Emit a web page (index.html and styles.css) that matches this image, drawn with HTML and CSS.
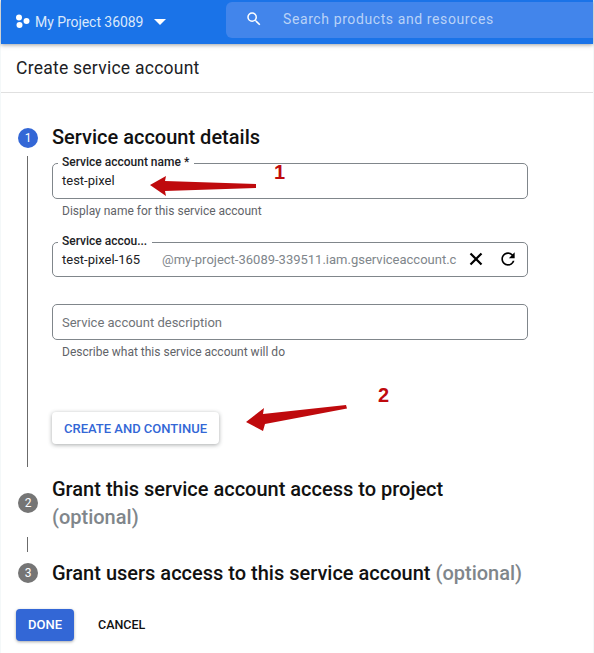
FILE: index.html
```html
<!DOCTYPE html>
<html lang="en">
<head>
<meta charset="utf-8">
<title>Create service account</title>
<link rel="stylesheet" href="styles.css">
</head>
<body>
<div class="page">
  <header class="topbar">
    <div class="project">
      <svg class="dots" width="15" height="14" viewBox="0 0 15 14"><circle cx="4" cy="3.5" r="3" fill="#fff"/><circle cx="11.5" cy="7" r="3" fill="#fff"/><circle cx="4.5" cy="11" r="3" fill="#fff"/></svg>
      <span class="project-name">My Project 36089</span>
      <svg class="caret" width="12" height="6" viewBox="0 0 12 6"><path d="M0 0h12L6 6z" fill="#fff"/></svg>
    </div>
    <div class="search">
      <svg class="search-icon" width="18" height="18" viewBox="0 0 24 24"><path fill="#fff" d="M15.5 14h-.79l-.28-.27A6.47 6.47 0 0 0 16 9.5 6.5 6.5 0 1 0 9.5 16c1.61 0 3.09-.59 4.23-1.57l.27.28v.79l5 4.99L20.49 19l-4.99-5zm-6 0C7.01 14 5 11.99 5 9.5S7.01 5 9.5 5 14 7.01 14 9.5 11.99 14 9.5 14z"/></svg>
      <span class="search-text">Search products and resources</span>
    </div>
  </header>
  <div class="titlebar">Create service account</div>
  <main class="content">
    <section class="step step-first">
      <div class="step-head">
        <span class="badge badge-active">1</span>
        <h2 class="step-title">Service account details</h2>
      </div>
      <div class="step-body">
        <div class="field field-name">
          <span class="legend">Service account name *</span>
          <span class="value">test-pixel</span>
        </div>
        <p class="hint hint-name">Display name for this service account</p>
        <div class="field field-id">
          <span class="legend">Service accou...</span>
          <span class="value value-id">test-pixel-165</span>
          <span class="suffix">@my-project-36089-339511.iam.gserviceaccount.c</span>
          <svg class="icon-x" width="14" height="14" viewBox="0 0 14 14"><path d="M1.5 1.500l11 11M12.500 1.500l-11 11" stroke="#000" stroke-width="2.200" fill="none"/></svg>
          <svg class="icon-refresh" width="20" height="20" viewBox="0 0 24 24"><path d="M17.65 6.35A7.958 7.958 0 0 0 12 4c-4.42 0-7.99 3.58-7.99 8s3.57 8 7.99 8c3.73 0 6.84-2.55 7.73-6h-2.08A5.99 5.99 0 0 1 12 18c-3.31 0-6-2.69-6-6s2.69-6 6-6c1.66 0 3.14.69 4.22 1.78L13 11h7V4l-2.35 2.35z"/></svg>
        </div>
        <div class="field field-desc">
          <span class="placeholder">Service account description</span>
        </div>
        <p class="hint hint-desc">Describe what this service account will do</p>
        <button class="btn-raised">CREATE AND CONTINUE</button>
      </div>
    </section>
    <section class="step step-second">
      <span class="badge badge-idle">2</span>
      <h2 class="step-title">Grant this service account access to project <span class="optional">(optional)</span></h2>
    </section>
    <div class="connector"></div>
    <section class="step step-third">
      <span class="badge badge-idle">3</span>
      <h2 class="step-title">Grant users access to this service account <span class="optional">(optional)</span></h2>
    </section>
    <div class="actions">
      <button class="btn-done">DONE</button>
      <button class="btn-cancel">CANCEL</button>
    </div>
  </main>
  <svg class="arrows" width="594" height="653" viewBox="0 0 594 653">
    <path fill="#bf0a0d" d="M150 185 L166 176 L165 181 L256 184 L256 188 L165 191 L166 196 Z"/>
    <path fill="#bf0a0d" d="M246 422 L264 408 L263 414 L346 405 L347 408.500 L265 424 L263 431 Z"/>
  </svg>
  <span class="note note-one">1</span>
  <span class="note note-two">2</span>
</div>
</body>
</html>
```
FILE: styles.css
```css
* { box-sizing: border-box; }
html, body { margin: 0; padding: 0; }
body { background: #fff; font-family: Roboto, "Liberation Sans", sans-serif; color: #000; }
.page { position: relative; width: 594px; height: 653px; overflow: hidden; padding: 0 1px; background: #f4f8f9; }
.topbar { height: 44px; background: #1a73e8; display: flex; align-items: flex-start; box-shadow: 0 1px 4px rgba(60,64,67,.5); position: relative; z-index: 1; }
.project { display: flex; align-items: center; height: 42px; padding-left: 14px; width: 225px; }
.dots { margin-right: 5px; }
.project-name { font-size: 14px; color: #dbe8fb; margin-top: 1px; letter-spacing: -.05px; }
.caret { margin: 2px 0 0 11px; }
.search { flex: 1; height: 36px; margin-top: 2px; background: #4285eb; border-radius: 6px 0 0 6px; display: flex; align-items: center; padding: 0 0 2px 19px; }
.search-icon { margin-right: 20px; }
.search-text { font-size: 14px; color: #b9d2f7; letter-spacing: .6px; }
.titlebar { height: 49px; background: #fff; border-bottom: 1px solid #e0e0e0; padding: 0 15px; display: flex; align-items: center; font-size: 17.500px; color: #202124; letter-spacing: .25px; }
.content { height: 560px; background: #fff; padding-top: 33px; position: relative; }
.step-head { display: flex; align-items: center; height: 22px; padding-left: 17px; }
.step-head .badge { margin-top: 2px; }
.badge { width: 20px; height: 20px; border-radius: 50%; display: flex; align-items: center; justify-content: center; font-size: 12px; color: #fff; flex: none; }
.badge-active { background: #3367d6; }
.badge-idle { background: #757575; }
.step-title { margin: 0; font-size: 20px; font-weight: 500; line-height: 28px; color: #111; }
.step-head .step-title { margin-left: 14px; }
.optional { color: #80868b; font-weight: 500; }
.step-body { margin-left: 26px; margin-top: 8px; padding-left: 24px; border-left: 1px solid #6b6b6b; height: 311px; padding-top: 7px; }
.field { position: relative; width: 476px; border: 1px solid #80868b; border-radius: 5px; display: flex; align-items: center; padding-left: 9px; background: #fff; }
.field-name { height: 36px; }
.field-id { height: 35px; margin-top: 24px; }
.field-desc { height: 36px; margin-top: 27px; }
.legend { position: absolute; left: 5px; top: -9px; background: #fff; padding: 0 5px 0 4px; font-size: 12px; font-weight: 500; line-height: 14px; color: #202124; }
.value { font-size: 13px; color: #202124; margin-top: -1px; }
.value-id { width: 100px; flex: none; margin-top: -1px; }
.suffix { font-size: 13px; color: #80868b; white-space: nowrap; margin-top: -1px; }
.icon-x { position: absolute; left: 416px; top: 9px; }
.icon-refresh { position: absolute; left: 445px; top: 6px; }
.placeholder { font-size: 13px; color: #6f7377; }
.hint { margin: 0; font-size: 12px; line-height: 14px; color: #5f6368; padding-left: 10px; }
.hint-name { margin-top: 5px; }
.hint-desc { margin-top: 5px; }
.btn-raised { display: block; margin-top: 53px; width: 167px; height: 32px; border: 0; border-radius: 4px; background: #fff; color: #3367d6; font: 500 13px Roboto, sans-serif; box-shadow: 0 1px 4px rgba(60,64,67,.45); padding: 0; }
.step-second { display: flex; align-items: center; padding-left: 17px; margin-top: 8px; gap: 14px; height: 56px; }
.step-second .step-title { width: 440px; }
.connector { margin: 6px 0 0 26px; width: 1px; height: 15px; background: #6b6b6b; }
.step-third { display: flex; align-items: center; padding-left: 17px; gap: 14px; margin-top: 7px; height: 28px; }
.step-third .step-title { white-space: nowrap; }
.actions { display: flex; align-items: center; padding-left: 15px; margin-top: 22px; }
.btn-done { width: 58px; height: 32px; border: 0; border-radius: 4px; background: #3367d6; color: #fff; font: 500 13px Roboto, sans-serif; box-shadow: 0 1px 3px rgba(60,64,67,.45); padding: 0 0 2px; }
.btn-cancel { margin-left: 24px; border: 0; background: none; color: #111; font: 500 12.500px Roboto, sans-serif; padding: 0 0 2px; }
.arrows { position: absolute; left: 0; top: 0; z-index: 2; pointer-events: none; }
.note { position: absolute; z-index: 2; font: 700 20px "Liberation Sans", Arial, sans-serif; line-height: 22px; color: #bf0a0d; }
.note-one { left: 274px; top: 161px; }
.note-two { left: 378px; top: 384px; }
```
